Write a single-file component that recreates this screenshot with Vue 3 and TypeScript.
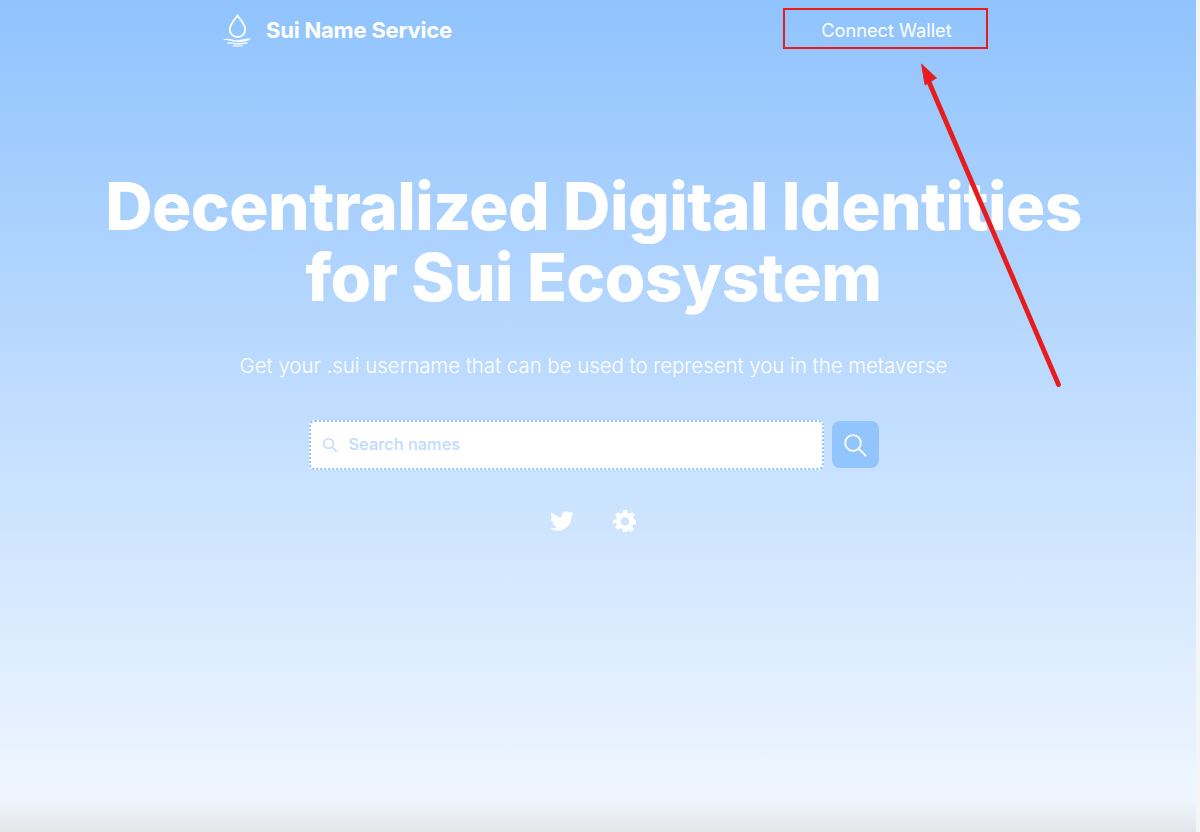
<script setup lang="ts">
const title: string[] = ['Decentralized Digital Identities', 'for Sui Ecosystem']
</script>

<template>
  <div class="page">
    <main class="main">
      <header class="header">
        <div class="brand">
          <svg class="logo" viewBox="0 0 28 33" fill="none" stroke="#fff" stroke-linecap="round">
            <path d="M14.500 1.500 C11 6.500 6.800 10.500 6.800 15.500 a7.700 7.500 0 0 0 15.400 0 C22.200 10.500 18 6.500 14.500 1.500 Z" stroke-width="1.800" />
            <path d="M1 25.500 C7 23.800 10 27 14.500 26.600 C19 26.200 23 24.200 27.500 25 C24 27.300 20 28 15 28 C10 28 6 25.500 1 25.500 Z" fill="#fff" stroke-width="0.400" />
            <path d="M5 29 C9 28.400 12 30.400 16 30 C19 29.700 21 29 24 29" stroke-width="1.300" />
            <path d="M10 32 C13 31.500 16 32.600 19.500 31.700" stroke-width="1.100" />
          </svg>
          <span class="brand-name">Sui Name Service</span>
        </div>
        <button class="connect" type="button">Connect Wallet</button>
      </header>

      <section class="hero">
        <h1 class="title">
          <span v-for="line in title" :key="line" class="title-line">{{ line }}</span>
        </h1>
        <p class="subtitle">Get your .sui username that can be used to represent you in the metaverse</p>

        <form class="search" @submit.prevent>
          <label class="field">
            <svg class="field-icon" viewBox="0 0 16 16" fill="none" stroke="#bedbfe" stroke-width="1.500" stroke-linecap="round">
              <circle cx="6.500" cy="6.500" r="4.800" />
              <path d="M10.200 10.200 14.500 14.500" />
            </svg>
            <input class="field-input" type="text" placeholder="Search names" />
          </label>
          <button class="search-btn" type="submit" aria-label="Search">
            <svg viewBox="0 0 24 24" fill="none" stroke="#fff" stroke-width="1.800" stroke-linecap="round">
              <circle cx="10" cy="10" r="7.800" />
              <path d="M15.800 15.800 22.500 22.500" />
            </svg>
          </button>
        </form>

        <div class="socials">
          <svg class="twitter" viewBox="0 0 24 24" fill="#fff">
            <path d="M23.950 4.570a10 10 0 0 1-2.820.77 4.960 4.960 0 0 0 2.160-2.720c-.95.550-2 .96-3.130 1.190a4.920 4.920 0 0 0-8.380 4.480C7.690 8.090 4.070 6.130 1.640 3.160a4.820 4.820 0 0 0-.67 2.480c0 1.710.87 3.210 2.190 4.100a4.900 4.900 0 0 1-2.230-.62v.06a4.920 4.920 0 0 0 3.950 4.830 5 5 0 0 1-2.210.08 4.940 4.940 0 0 0 4.600 3.420A9.870 9.870 0 0 1 0 19.540a14 14 0 0 0 7.560 2.210c9.050 0 14-7.500 14-13.980 0-.21 0-.42-.02-.63a9.940 9.940 0 0 0 2.410-2.570z" />
          </svg>
          <svg class="gear" viewBox="0 0 24 24" fill="#fff">
            <path fill-rule="evenodd" d="M10 1h4l.6 3.100c.7.200 1.300.5 1.900.8l2.600-1.800 2.800 2.800-1.800 2.600c.3.600.6 1.200.8 1.900L23 11v4l-2.900.6c-.2.700-.5 1.300-.8 1.900l1.700 2.600-2.800 2.800-2.600-1.700c-.6.300-1.200.6-1.900.8L14 23h-4l-.6-2.900c-.7-.2-1.300-.5-1.900-.8l-2.600 1.700-2.800-2.800 1.700-2.600c-.3-.6-.6-1.200-.8-1.900L0 15v-4l3.100-.6c.2-.7.500-1.300.8-1.900L2.100 5.900l2.800-2.800 2.600 1.800c.6-.3 1.200-.6 1.900-.8L10 1Zm2 7.200a4.300 4.300 0 1 0 0 8.600 4.300 4.300 0 0 0 0-8.600Z" />
          </svg>
        </div>
      </section>
    </main>

    <svg class="annotation" viewBox="0 0 1200 832" fill="none">
      <path d="M1058.500 384.500 929 82" stroke="#e71c1c" stroke-width="4.800" stroke-linecap="round" />
      <path d="M921.500 64 936.500 78 925 85Z" fill="#e71c1c" stroke="#e71c1c" stroke-width="0.800" />
    </svg>
  </div>
</template>

<style scoped>
.page {
  position: relative;
  height: 832px;
  width: 1200px;
  overflow: hidden;
  background: #f4f5f7;
  font-family: Inter, "Liberation Sans", sans-serif;
  color: #fff;
}

.main {
  width: 1196px;
  height: 832px;
  display: flex;
  flex-direction: column;
  background: linear-gradient(180deg, #90c3fd 0%, #eff6ff 96%, #e4e6e9 100%);
}

.header {
  display: flex;
  align-items: center;
  height: 41px;
  margin-top: 8px;
  padding-left: 223px;
}

.brand {
  display: flex;
  align-items: center;
  gap: 15px;
  width: 560px;
}

.logo {
  width: 28px;
  height: 33px;
  margin-top: 4px;
}

.brand-name {
  font-size: 22px;
  font-weight: 700;
  letter-spacing: -0.2px;
  margin-top: 3px;
}

.connect {
  box-sizing: border-box;
  width: 205px;
  height: 41px;
  border: 2px solid #e71c1c;
  background: none;
  color: #fff;
  font: 400 18.200px Inter, "Liberation Sans", sans-serif;
  padding: 3px 0 0 2px;
}

.hero {
  display: flex;
  flex-direction: column;
  align-items: center;
  padding-right: 9px;
}

.title {
  margin: 121.500px 0 0;
  font-size: 65.500px;
  line-height: 71.500px;
  font-weight: 800;
  letter-spacing: -0.55px;
  text-align: center;
}

.title-line {
  display: block;
}

.subtitle {
  margin: 38px 0 0;
  font-size: 20.400px;
  line-height: 28px;
  font-weight: 300;
}

.search {
  display: flex;
  gap: 8px;
  margin-top: 40px;
}

.field {
  box-sizing: border-box;
  display: flex;
  align-items: center;
  gap: 11px;
  width: 515px;
  height: 50px;
  padding-left: 11px;
  background: #fff;
  border: 2px dotted #90c3fd;
  border-radius: 6px;
}

.field-icon {
  width: 16px;
  height: 16px;
  flex: none;
}

.field-input {
  flex: 1;
  min-width: 0;
  border: 0;
  outline: 0;
  padding: 0 0 2px;
  background: none;
  font: 500 16.400px Inter, "Liberation Sans", sans-serif;
  color: #1e3a8a;
}

.field-input::placeholder {
  color: #bedbfe;
  opacity: 1;
}

.search-btn {
  width: 47px;
  height: 47px;
  margin-top: 1.500px;
  display: flex;
  align-items: center;
  justify-content: center;
  padding: 0;
  border: 0;
  border-radius: 8px;
  background: #93c5fd;
}

.search-btn svg {
  width: 24px;
  height: 24px;
}

.socials {
  display: flex;
  align-items: center;
  gap: 39px;
  margin-top: 39px;
}

.twitter {
  width: 24px;
  height: 24px;
}

.gear {
  width: 24px;
  height: 24px;
}

.annotation {
  position: absolute;
  inset: 0;
  width: 1200px;
  height: 832px;
  pointer-events: none;
}
</style>
